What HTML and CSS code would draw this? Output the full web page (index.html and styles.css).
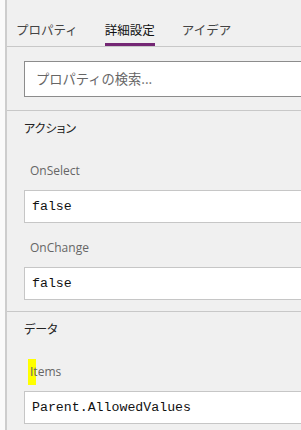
FILE: index.html
```html
<!DOCTYPE html>
<html lang="ja">
<head>
<meta charset="utf-8">
<link rel="stylesheet" href="styles.css">
</head>
<body>
<div class="panel">
  <div class="tabs">
    <div class="tab">プロパティ</div>
    <div class="tab active">詳細設定</div>
    <div class="tab">アイデア</div>
  </div>
  <div class="search-wrap">
    <div class="search">プロパティの検索...</div>
  </div>
  <div class="section">
    <div class="heading">アクション</div>
    <div class="prop">
      <div class="label">OnSelect</div>
      <div class="value">false</div>
    </div>
    <div class="prop">
      <div class="label">OnChange</div>
      <div class="value">false</div>
    </div>
  </div>
  <div class="section">
    <div class="heading">データ</div>
    <div class="prop">
      <div class="label"><span class="hl">I</span>tems</div>
      <div class="value">Parent.AllowedValues</div>
    </div>
  </div>
</div>
</body>
</html>
```

FILE: styles.css
```css
html, body {
  margin: 0;
  padding: 0;
  background: #fafafa;
  overflow: hidden;
  height: 100%;
}
.panel {
  margin-left: 5px;
  height: 100%;
  border-left: 2px solid #cdcdcd;
  background: #f0f0f0;
  font-family: "Noto Sans CJK JP", "Open Sans", sans-serif;
}
.tabs {
  display: flex;
  gap: 27px;
  padding-left: 9px;
  border-bottom: 1px solid #c8c8c8;
}
.tab {
  font-size: 12.5px;
  line-height: 20px;
  padding-top: 20px;
  padding-bottom: 3px;
  border-bottom: 3px solid transparent;
  color: #444;
}
.tab.active {
  color: #111;
  border-bottom-color: #742774;
}
.search-wrap {
  padding: 14px 0 13px 17px;
}
.search {
  height: 34px;
  border: 1px solid #8c8c8c;
  border-right: none;
  background: #fff;
  padding-left: 11px;
  line-height: 34px;
  font-size: 13.25px;
  color: #666;
  white-space: nowrap;
}
.section {
  border-top: 1px solid #c8c8c8;
  padding: 7px 0 11px 17px;
}
.heading {
  font-size: 12px;
  line-height: 20px;
  color: #222;
  font-feature-settings: "palt";
}
.prop {
  margin-top: 15px;
}
.heading + .prop {
  margin-top: 23px;
}
.label {
  font-family: "Open Sans", sans-serif;
  font-size: 12px;
  line-height: 20px;
  color: #666;
  padding-left: 6px;
  margin-bottom: 9px;
}
.hl {
  display: inline-block;
  background: #ffff00;
  padding: 3px 3px 3px 2px;
  margin: -3px -3px -3px -2px;
  line-height: 20px;
}
.value {
  height: 31px;
  border: 1px solid #c6c6c6;
  border-right: none;
  background: #fff;
  padding-left: 7px;
  line-height: 31px;
  font-family: "Liberation Mono", monospace;
  font-size: 13.25px;
  color: #111;
  white-space: nowrap;
}
```
